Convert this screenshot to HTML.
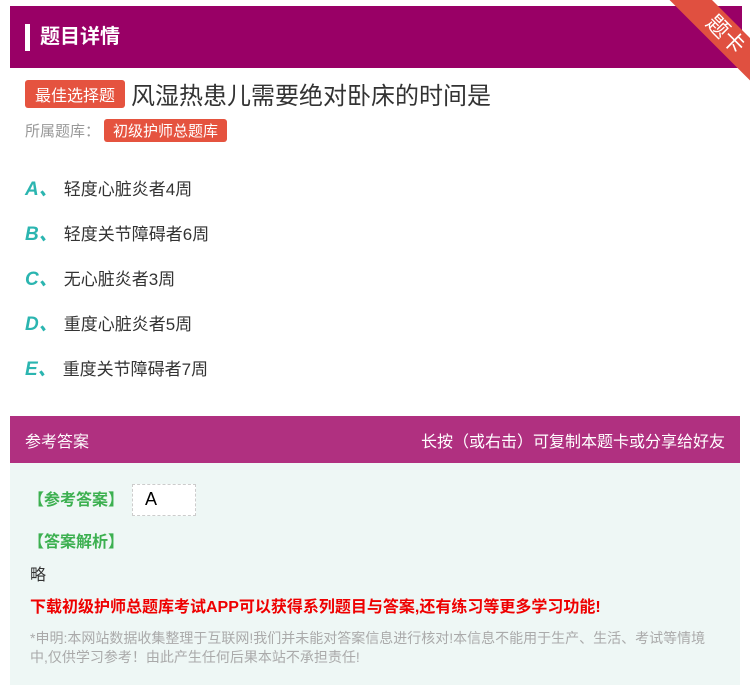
<!DOCTYPE html>
<html><head><meta charset="utf-8"><style>
*{margin:0;padding:0;box-sizing:border-box}
body{width:750px;height:685px;background:#fff;font-family:"Liberation Sans","Noto Sans CJK SC",sans-serif;position:relative;overflow:hidden}
.hd{position:absolute;left:10px;top:6px;width:732px;height:62px;background:#990066}
.hd .bar{position:absolute;left:15px;top:18px;width:5px;height:27px;background:#fff}
.hd .t{position:absolute;left:30px;top:14px;color:#fff;font-size:20px;font-weight:bold}
.rib{position:absolute;width:130px;height:30px;background:#e05040;transform:rotate(45deg);transform-origin:0 0;left:690px;top:-22px;color:#fff;font-size:22px;text-align:center;line-height:30px}
.tag{display:inline-block;background:#e5533f;color:#fff;border-radius:3px}
.q{position:absolute;left:25px;top:76px;font-size:24px;color:#333}
.q .tag{font-size:16px;padding:2px 10px;vertical-align:3px;margin-right:6px}
.lib{position:absolute;left:25px;top:119px;font-size:15px;color:#999}
.lib .tag{font-size:15px;padding:1px 9px;margin-left:4px}
.op{position:absolute;left:25px;font-size:17px;color:#333}
.op b{color:#2bb5b0;font-style:italic;font-size:19px;margin-right:6px}
.ah{position:absolute;left:10px;top:416px;width:730px;height:47px;background:#b03080;color:#fff;font-size:16px}
.ah .l{position:absolute;left:15px;top:12px}.ah .r{position:absolute;right:15px;top:12px}
.ab{position:absolute;left:10px;top:463px;width:730px;height:222px;background:#eef7f5}
.g{color:#3cb050;font-size:16px;font-weight:bold;position:absolute}
</style></head><body>
<div class="hd"><div class="bar"></div><div class="t">题目详情</div></div>
<div class="rib">题卡</div>
<div class="q"><span class="tag">最佳选择题</span>风湿热患儿需要绝对卧床的时间是</div>
<div class="lib">所属题库：<span class="tag">初级护师总题库</span></div>
<div class="op" style="top:174px"><b>A、</b>轻度心脏炎者4周</div>
<div class="op" style="top:219px"><b>B、</b>轻度关节障碍者6周</div>
<div class="op" style="top:264px"><b>C、</b>无心脏炎者3周</div>
<div class="op" style="top:309px"><b>D、</b>重度心脏炎者5周</div>
<div class="op" style="top:354px"><b>E、</b>重度关节障碍者7周</div>
<div class="ah"><span class="l">参考答案</span><span class="r">长按（或右击）可复制本题卡或分享给好友</span></div>
<div class="ab">
<div class="g" style="left:18px;top:23px">【参考答案】</div>
<div style="position:absolute;left:122px;top:21px;width:64px;height:32px;background:#fff;border:1px dashed #ccc;font-size:18px;padding-left:12px;padding-top:4px">A</div>
<div class="g" style="left:18px;top:65px">【答案解析】</div>
<div style="position:absolute;left:20px;top:98px;font-size:16px;color:#333">略</div>
<div style="position:absolute;left:20px;top:130px;font-size:16px;color:#e00;font-weight:bold">下载初级护师总题库考试APP可以获得系列题目与答案,还有练习等更多学习功能!</div>
<div style="position:absolute;left:20px;top:166px;width:690px;font-size:14px;color:#aaa;line-height:19px">*申明:本网站数据收集整理于互联网!我们并未能对答案信息进行核对!本信息不能用于生产、生活、考试等情境中,仅供学习参考！由此产生任何后果本站不承担责任!</div>
</div>
</body></html>
